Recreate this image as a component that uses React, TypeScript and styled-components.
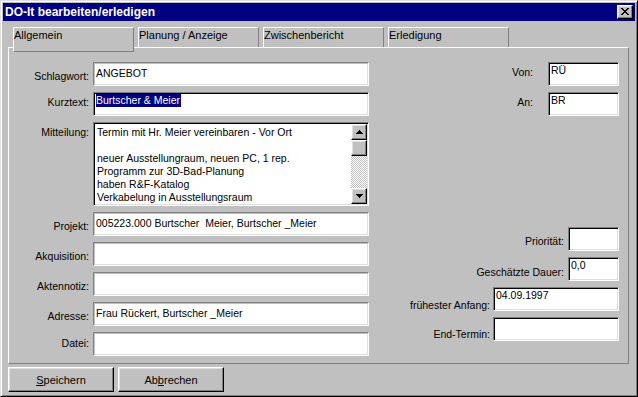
import React from 'react'
import styled, { createGlobalStyle, css } from 'styled-components'

const GlobalStyle = createGlobalStyle`
  html, body {
    margin: 0;
    padding: 0;
    background: #c0c0c0;
  }
  * {
    box-sizing: border-box;
  }
`

const raised = css`
  background: #c0c0c0;
  border: 1px solid;
  border-color: #fff #000 #000 #fff;
  box-shadow: inset -1px -1px #808080, inset 1px 1px #dfdfdf;
`

const Window = styled.div`
  width: 638px;
  height: 397px;
  background: #c0c0c0;
  border: 1px solid;
  border-color: #dfdfdf #000 #000 #dfdfdf;
  box-shadow: inset 1px 1px #fff, inset -1px -1px #808080;
  padding: 2px;
  display: flex;
  flex-direction: column;
  font-family: 'Liberation Sans', Arial, sans-serif;
  font-size: 11px;
  color: #000;
`

const TitleBar = styled.div`
  height: 18px;
  background: #000080;
  color: #fff;
  display: flex;
  align-items: center;
  justify-content: space-between;
  padding: 0 2px;
  font-size: 12px;
  font-weight: bold;
  line-height: 14px;
`

const CloseButton = styled.div`
  ${raised};
  width: 16px;
  height: 14px;
  display: flex;
  align-items: center;
  justify-content: center;
  margin-bottom: 1px;
`

const TabStrip = styled.div`
  display: flex;
  align-items: flex-start;
  gap: 4px;
  height: 20px;
  margin: 6px 0 0 10px;
`

const Tab = styled.div<{ $active?: boolean }>`
  position: relative;
  z-index: 1;
  width: 121px;
  height: ${({ $active }) => ($active ? 25 : 20)}px;
  background: #c0c0c0;
  border-top: 1px solid #fff;
  border-left: 1px solid #fff;
  border-right: 1px solid #808080;
  border-bottom: ${({ $active }) => ($active ? '1px solid #808080' : 'none')};
  padding: 1px 0 0 0;
  line-height: 13px;
  white-space: nowrap;
`

const Panel = styled.div`
  width: 621px;
  height: 317px;
  margin-left: 5px;
  border: 1px solid;
  border-color: #fff #808080 #808080 #fff;
  display: flex;
`

const LeftForm = styled.div`
  display: grid;
  grid-template-columns: 80px 276px;
  grid-template-rows: 24px 24px 84px;
  grid-auto-rows: 24px;
  column-gap: 4px;
  row-gap: 6px;
  align-content: start;
  padding-top: 14px;
`

const Label = styled.div<{ $top: number }>`
  font-size: 10.5px;
  line-height: 13px;
  text-align: right;
  white-space: nowrap;
  padding-top: ${({ $top }) => $top}px;
`

const Field = styled.div<{ $flat?: boolean; $w?: number }>`
  width: ${({ $w }) => ($w ? `${$w}px` : 'auto')};
  height: 24px;
  background: #fff;
  border: 1px solid;
  border-color: #808080 #fff #fff #808080;
  box-shadow: ${({ $flat }) =>
    $flat
      ? 'inset 1px 1px #c0c0c0, inset -1px -1px #dfdfdf'
      : 'inset 1px 1px #000, inset -1px -1px #dfdfdf'};
  padding: ${({ $flat }) => ($flat ? '4px 0 0 2px' : '1px 0 0 2px')};
  font-size: 10.5px;
  line-height: 13px;
  white-space: pre;
  overflow: hidden;
`

const Selected = styled.span`
  display: inline-block;
  background: #000080;
  color: #fff;
  padding-right: 1px;
`

const Memo = styled.div`
  height: 84px;
  background: #fff;
  border: 1px solid;
  border-color: #808080 #fff #fff #808080;
  box-shadow: inset 1px 1px #000, inset -1px -1px #dfdfdf;
  padding: 1px;
  display: flex;
`

const MemoText = styled.div`
  flex: 1;
  padding: 2px 0 0 2px;
  font-size: 10.5px;
  line-height: 13px;
  white-space: pre;
  overflow: hidden;
`

const ScrollBar = styled.div`
  width: 16px;
  display: flex;
  flex-direction: column;
`

const ScrollButton = styled.div`
  ${raised};
  width: 16px;
  height: 16px;
  display: flex;
  align-items: center;
  justify-content: center;
`

const ScrollTrack = styled.div`
  flex: 1;
  background-image: repeating-conic-gradient(#c0c0c0 0 25%, #fff 0 50%);
  background-size: 2px 2px;
`

const RightForm = styled.div`
  flex: 1;
  display: flex;
  flex-direction: column;
  justify-content: space-between;
  padding: 14px 9px 22px 0;
`

const Group = styled.div`
  display: flex;
  flex-direction: column;
  gap: 6px;
`

const Row = styled.div<{ $gap: number }>`
  display: flex;
  justify-content: flex-end;
  align-items: flex-start;
  gap: ${({ $gap }) => $gap}px;
  height: 24px;
`

const ButtonRow = styled.div`
  display: flex;
  gap: 4px;
  margin: 3px 0 0 5px;
`

const Button = styled.button`
  ${raised};
  width: 106px;
  height: 25px;
  padding: 0;
  font-family: 'Liberation Sans', Arial, sans-serif;
  font-size: 11px;
  color: #000;
`

const closeGlyph = [
  'XX....XX',
  '.XX..XX.',
  '..XXXX..',
  '...XX...',
  '..XXXX..',
  '.XX..XX.',
  'XX....XX',
]

const CloseIcon = () => (
  <svg width="8" height="7" viewBox="0 0 8 7" shapeRendering="crispEdges">
    {closeGlyph.flatMap((row, y) =>
      row.split('').map((c, x) =>
        c === 'X' ? <rect key={`${x}-${y}`} x={x} y={y} width="1" height="1" fill="#000" /> : null,
      ),
    )}
  </svg>
)

const Arrow = ({ down }: { down?: boolean }) => (
  <svg width="7" height="4" viewBox="0 0 7 4" shapeRendering="crispEdges">
    <path d={down ? 'M0 0h7v1h-1v1h-1v1h-1v1h-1v-1h-1v-1h-1v-1h-1z' : 'M3 0h1v1h1v1h1v1h1v1h-7v-1h1v-1h1v-1h1z'} fill="#000" />
  </svg>
)

const memoLines = [
  'Termin mit Hr. Meier vereinbaren - Vor Ort',
  '',
  'neuer Ausstellungraum, neuen PC, 1 rep.',
  'Programm zur 3D-Bad-Planung',
  'haben R&F-Katalog',
  'Verkabelung in Ausstellungsraum',
]

const lowerFields = [
  { label: 'Projekt:', top: 8, value: '005223.000 Burtscher  Meier, Burtscher _Meier' },
  { label: 'Akquisition:', top: 8, value: '' },
  { label: 'Aktennotiz:', top: 8, value: '' },
  { label: 'Adresse:', top: 8, value: 'Frau Rückert, Burtscher _Meier' },
  { label: 'Datei:', top: 5, value: '' },
]

const scheduleFields = [
  { label: 'Priorität:', top: 8, gap: 4, w: 51, value: '' },
  { label: 'Geschätzte Dauer:', top: 9, gap: 4, w: 51, value: '0,0' },
  { label: 'frühester Anfang:', top: 12, gap: 3, w: 126, value: '04.09.1997' },
  { label: 'End-Termin:', top: 11, gap: 3, w: 126, value: '' },
]

const tabs = ['Allgemein', 'Planung / Anzeige', 'Zwischenbericht', 'Erledigung']

const App = () => {
  return (
    <>
      <GlobalStyle />
      <Window>
        <TitleBar>
          <span>DO-It bearbeiten/erledigen</span>
          <CloseButton>
            <CloseIcon />
          </CloseButton>
        </TitleBar>
        <TabStrip>
          {tabs.map((t, i) => (
            <Tab key={t} $active={i === 0}>
              {t}
            </Tab>
          ))}
        </TabStrip>
        <Panel>
          <LeftForm>
            <Label $top={8}>Schlagwort:</Label>
            <Field $flat>ANGEBOT</Field>
            <Label $top={4}>Kurztext:</Label>
            <Field>
              <Selected>Burtscher &amp; Meier</Selected>
            </Field>
            <Label $top={4}>Mitteilung:</Label>
            <Memo>
              <MemoText>{memoLines.join('\n')}</MemoText>
              <ScrollBar>
                <ScrollButton>
                  <Arrow />
                </ScrollButton>
                <ScrollButton />
                <ScrollTrack />
                <ScrollButton>
                  <Arrow down />
                </ScrollButton>
              </ScrollBar>
            </Memo>
            {lowerFields.map((f) => (
              <React.Fragment key={f.label}>
                <Label $top={f.top}>{f.label}</Label>
                <Field $flat>{f.value}</Field>
              </React.Fragment>
            ))}
          </LeftForm>
          <RightForm>
            <Group>
              <Row $gap={15}>
                <Label $top={4}>Von:</Label>
                <Field $w={71}>RÜ</Field>
              </Row>
              <Row $gap={15}>
                <Label $top={4}>An:</Label>
                <Field $w={71}>BR</Field>
              </Row>
            </Group>
            <Group>
              {scheduleFields.map((f) => (
                <Row key={f.label} $gap={f.gap}>
                  <Label $top={f.top}>{f.label}</Label>
                  <Field $w={f.w}>{f.value}</Field>
                </Row>
              ))}
            </Group>
          </RightForm>
        </Panel>
        <ButtonRow>
          <Button>
            <u>S</u>peichern
          </Button>
          <Button>
            Ab<u>b</u>rechen
          </Button>
        </ButtonRow>
      </Window>
    </>
  )
}

export default App
